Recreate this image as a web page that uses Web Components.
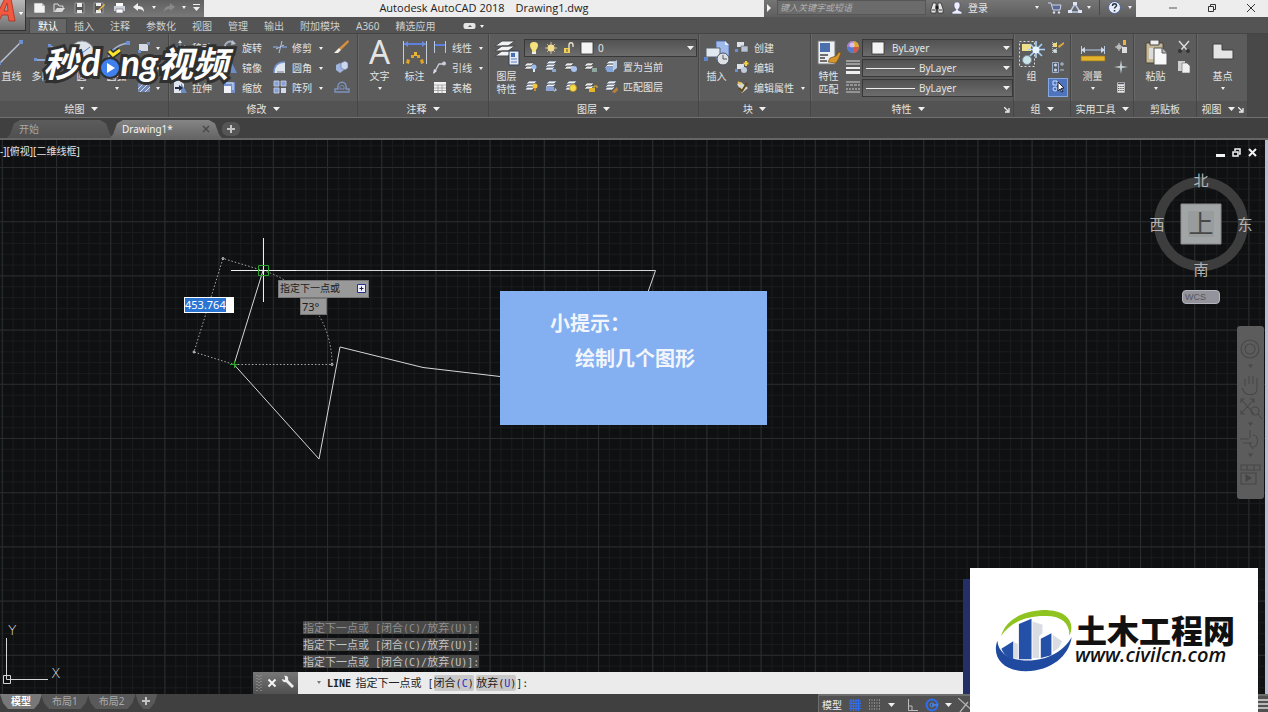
<!DOCTYPE html>
<html lang="zh-CN">
<head>
<meta charset="utf-8">
<title>Autodesk AutoCAD 2018</title>
<style>
	html, body {
		margin: 0;
		height: 100%;
	}
	body {
		display: flex;
		flex-direction: column;
		position: relative;
		overflow: hidden;
		background: #404040;
		color: #e4e4e4;
		font: 10px/14px "Noto Sans", "Noto Sans CJK SC", sans-serif;
	}
	drawing-area {
		flex: 1;
	}
	video-mark {
		position: absolute;
		left: 43px;
		top: 39px;
	}
	site-card {
		position: absolute;
		right: 10px;
		bottom: 0;
	}
</style>
</head>
<body>
<title-bar></title-bar>
<ribbon-tabs></ribbon-tabs>
<ribbon-bar></ribbon-bar>
<doc-tabs></doc-tabs>
<drawing-area></drawing-area>
<status-bar></status-bar>
<video-mark></video-mark>
<site-card></site-card>

<script>
// name: [width, height, markup]
const sheets = `<path d="M3 4h7l-3 3H0zM3 7h7l-3 3H0z" fill="#eee" stroke="#444" stroke-width=".6"/>`
const stack = `<path d="M5 2h8l-3 3H2zM4 5h8l-3 3H1zM3 8h8l-3 3H1z" fill="#eef2f6" stroke="#4a5668" stroke-width=".7"/>`
const ICONS = {
	caret: [7, 4, `<path d="M0 0h7L3.500 4z" fill="#f0f0f0"/>`],
	dot: [4, 3, `<path d="M0 0h4L2 3z" fill="#f0f0f0"/>`],
	right: [4, 8, `<path d="M0 0l4 4-4 4z" fill="#f4f4f4"/>`],
	launch: [6, 6, `<path d="M0 0l4 4M5 1v4H1" fill="none" stroke="#eee" stroke-width="1.300"/>`],
	app: [24, 24, `<path d="M-6 21L5-2h6l4 23h-6l-1-6H2l-3 6zM4 11h4L7 3z" fill="#c94a35" stroke="#8c2a1c" stroke-width=".8"/>`],
	new: [13, 12, `<path d="M1 1h8l3 3v7H1z" fill="#f2f2f2" stroke="#777" stroke-width=".6"/><path d="M9 1v3h3" fill="#bbb"/>`],
	open: [13, 12, `<path d="M1 10V2h4l1 2h4v2" fill="none" stroke="#ddd"/><path d="M1 10l3-4h8l-3 4z" fill="#d8d8d8"/>`],
	save: [13, 12, `<path d="M2 1h9v10H2z" fill="#555" stroke="#999"/><path d="M4 1h5v4H4zM4 8h5v3H4z" fill="#eee"/>`],
	saveas: [13, 12, `<path d="M1 1h9v10H1z" fill="#555" stroke="#999"/><path d="M3 1h5v3H3zM3 8h5v3H3z" fill="#eee"/><path d="M5 8l6-6 1 1-6 6z" fill="#f4bb42"/>`],
	print: [13, 12, `<path d="M3 1h7v3H3z" fill="#fff"/><path d="M1 4h11v5H1z" fill="#cdd1d8"/><path d="M3 7h7v4H3z" fill="#fff" stroke="#778" stroke-width=".7"/>`],
	undo: [12, 12, `<path d="M0 5l5-4v3c4 0 6 2 6 6-1-2-3-3-6-3v2z" fill="#eee"/>`],
	redo: [12, 12, `<path d="M12 5L7 1v3C3 4 1 6 1 10c1-2 3-3 6-3v2z" fill="#888"/>`],
	more: [7, 7, `<path d="M0 0h7v1H0zM0 3h7L3.500 7z" fill="#f0f0f0"/>`],
	binoc: [14, 12, `<path d="M3 1h3v10H1V7zM8 1h3l2 6v4H8z" fill="#e6e6e6" stroke="#333" stroke-width=".8"/><path d="M6 4h2v3H6zM2 8h3M9 8h3" stroke="#333" stroke-width="1"/>`],
	user: [12, 12, `<path d="M6 0c3 0 3 2 3 4S7 7 7 8l4 2v2H1v-2l4-2C5 7 3 6 3 4s0-4 3-4z" fill="#eef" stroke="#3e4d6d" stroke-width=".6"/>`],
	cart: [14, 12, `<path d="M0 1h3l2 7h7l1-5H4" fill="#5b6990" stroke="#cdd6ee"/><circle cx="6" cy="10.500" r="1.200" fill="#dde"/><circle cx="11" cy="10.500" r="1.200" fill="#dde"/>`],
	a360: [14, 12, `<path d="M7 2L2 10h10z" fill="none" stroke="#b9c8e6" stroke-width="1.600"/><path d="M5 0h4v3H5zM0 8h4v3H0zM10 8h4v3h-4z" fill="#dfe6f4"/>`],
	help: [13, 13, `<circle cx="6.500" cy="6.500" r="6" fill="#e8edf8" stroke="#4a6192"/><path d="M4.500 5c0-3 4-3 4-.500 0 1.500-2 1.500-2 3M6.500 9v1.500" fill="none" stroke="#234" stroke-width="1.500"/>`],
	min: [10, 10, `<path d="M1 5h8" stroke="#555"/>`],
	restore: [10, 10, `<path d="M1.500 3.500h5v5h-5zM3.500 3V1.500h5v5H7" fill="none" stroke="#333"/>`],
	close: [10, 10, `<path d="M1 1l8 8M9 1L1 9" stroke="#333"/>`],
	play: [13, 8, `<rect x=".5" y="1" width="12" height="6" rx="2" fill="#e6e6e6"/><path d="M5 5h4L7 3z" fill="#555"/>`],
	line: [26, 26, `<path d="M0 24L22 2" stroke="#b8c2d4" stroke-width="1.500"/><path d="M20 0h4v4h-4zM-1 22h3v3h-3z" fill="#6b8fd0"/>`],
	pline: [26, 26, `<path d="M1 20h14c8 0 8-14 0-14" fill="none" stroke="#8fa4ce" stroke-width="2"/><path d="M14 4h3v3h-3zM0 18h3v3H0z" fill="#6e92d4"/>`],
	circle: [26, 26, `<circle cx="13" cy="13" r="12" fill="#dfe3e8" stroke="#8a9098"/><path d="M13 13l8-6" stroke="#4d79c7"/>`],
	arc: [26, 26, `<path d="M3 22C5 12 12 5 24 3" fill="none" stroke="#a5b4ce" stroke-width="1.500"/><path d="M22 1h4v4h-4zM1 20h4v4H1zM8 9h4v4H8z" fill="#6b8fd0"/>`],
	rect: [14, 14, `<path d="M2 4h9v7H2z" fill="#d4dae6"/><path d="M10 2h3v3h-3zM1 10h3v3H1z" fill="#6f8fcb"/>`],
	ellipse: [14, 14, `<ellipse cx="7" cy="7" rx="6" ry="4" fill="none" stroke="#b8c2d4"/><path d="M6 6h2v2H6z" fill="#6f8fcb"/>`],
	hatch: [14, 14, `<path d="M1 3h12v9H1z" fill="#7187b4"/><path d="M1 9l6-6M3 12l9-9M8 12l5-5" stroke="#d8deea"/>`],
	move: [14, 14, `<path d="M7 0l2 3H5zM7 14l2-3H5zM0 7l3-2v4zM14 7l-3-2v4z" fill="#dde3ee"/><path d="M7 3v8M3 7h8" stroke="#91a6cf"/>`],
	copy: [14, 14, `<circle cx="5" cy="6" r="4" fill="#788dba"/><circle cx="9" cy="8" r="4" fill="#d3d9e5"/>`],
	stretch: [14, 14, `<path d="M1 1h6l4 3v9H1z" fill="#dfe6ef"/><path d="M8 3l6 10H8z" fill="#6e8cc7"/><path d="M2 7h4V5l4 3-4 3V9H2z" fill="#222d42"/>`],
	rotate: [14, 14, `<path d="M11 3a5.500 5.500 0 1 0 1 7" fill="none" stroke="#a6b0c2" stroke-width="2"/><path d="M9 0l4 4-5 1z" fill="#b8c2d4"/>`],
	mirror: [14, 14, `<path d="M6 1v12H0z" fill="#dfe3ea"/><path d="M8 1v12h6z" fill="#6e8cc7"/>`],
	scale: [14, 14, `<path d="M1 2h11v11H8V6H1z" fill="#7390cc"/><path d="M1 6h7v7H1z" fill="#eff2f6"/><path d="M3 3h7v7" fill="none" stroke="#dce4f4"/>`],
	trim: [14, 14, `<path d="M0 7h5M9 7h5" stroke="#7d97cb" stroke-width="1.500"/><path d="M6 13L9 1M3 9l8-4" stroke="#b7c7e2"/>`],
	fillet: [14, 14, `<path d="M1 13C1 5 5 2 12 2v11z" fill="#dfe5ee"/><path d="M1 13C1 5 5 2 12 2" fill="none" stroke="#7493d0" stroke-width="1.500"/><path d="M4 12h7" stroke="#777"/>`],
	array: [14, 14, `<path d="M1 1h5v5H1zM8 1h5v5H8zM1 8h5v5H1z" fill="#89a1d5" stroke="#c8d4ee" stroke-width=".8"/><path d="M8 8h5v5H8z" fill="#d5dce9"/>`],
	erase: [16, 14, `<path d="M5 8l9-8 1 2-8 8z" fill="#d9903b"/><path d="M0 13l5-5 2 2-3 3z" fill="#f4efe5"/>`],
	explode: [16, 14, `<path d="M2 5l4-2 4 2v5l-4 3-4-3z" fill="#9fb4de"/><path d="M7 3l4-2 3 2v5l-3 2-4-2z" fill="#cbd7ef" stroke="#607199" stroke-width=".6"/>`],
	offset: [16, 14, `<path d="M1 12h14V9h-3c2-9-10-9-8 0H1z" fill="none" stroke="#7e93be" stroke-width="1.400"/><path d="M6 9c-1-5 5-5 4 0z" fill="none" stroke="#7e93be"/>`],
	dim: [26, 26, `<path d="M1.500 1v23M24.500 1v23" stroke="#c6ccd6"/><path d="M2 4h22" stroke="#5d7fe0" stroke-width="2"/><path d="M2 4l4-3v6zM24 4l-4-3v6z" fill="#6b8cd8"/><path d="M9 15h3v3H9zM15 15h3v3h-3zM5 19l3 1-1 4-3-1zM21 19l-3 1 1 4 3-1z" fill="#e0a425"/><path d="M12 12h3v4h-3z" fill="#e8b63c"/>`],
	linear: [14, 14, `<path d="M1.500 1v12M12.500 1v12" stroke="#b7c7e2"/><path d="M2 5h10" stroke="#5d7fe0" stroke-width="2"/>`],
	leader: [14, 14, `<path d="M1 13l5-9h5" fill="none" stroke="#c9d0dc" stroke-width="1.300"/><circle cx="11" cy="3.500" r="2" fill="#c9d0dc"/><path d="M0 14l1-5 3 2z" fill="#dde"/>`],
	table: [14, 14, `<path d="M1 2h12v11H1z" fill="#f2f2f2"/><path d="M1 5h12M1 8h12M1 10.500h12M5 5v8M9 5v8" stroke="#999" stroke-width=".8"/>`],
	layerprop: [26, 26, `<path d="M8 1h13l-7 5H1z M8 6h13l-7 5H1zM8 11h13l-7 5H1z" fill="#f0f2f4" stroke="#484848"/><path d="M15 11h10v14H15z" fill="#e6ecf6" stroke="#333e56"/><path d="M17 13h4v4h-4z" fill="#4770b8"/><path d="M17 19h6M17 22h6" stroke="#5b7cb8"/>`],
	bulb: [12, 14, `<path d="M6 1c6 0 4 6 2 8v3H4V9C2 7 0 1 6 1z" fill="#f6e27c"/><path d="M4 11h4v2H4z" fill="#eee"/>`],
	sun: [14, 14, `<path d="M7 1v12M1 7h12M3 3l8 8M11 3l-8 8" stroke="#c9bd95"/><circle cx="7" cy="7" r="3.500" fill="#f3dc8c"/>`],
	unlock: [14, 14, `<path d="M2 7h6v5H2z" fill="#f2cf57"/><path d="M7 7V4c0-3 4-3 4 0v2" fill="none" stroke="#e8e0c8" stroke-width="1.400"/><path d="M4.500 8h1v3h-1z" fill="#554"/>`],
	swatch: [14, 14, `<path d="M1 1h12v12H1z" fill="#f4f4f4" stroke="#333" stroke-width=".8"/>`],
	layoff: [14, 14, sheets + `<circle cx="10" cy="8" r="2.500" fill="#9bbdf0"/><path d="M9 10h2v3H9z" fill="#dfe8f8"/>`],
	layiso: [14, 14, stack + `<path d="M8 10h4v3H8z" fill="#90a4c8"/>`],
	layfrz: [14, 14, sheets + `<circle cx="10" cy="10" r="3" fill="#a8c4f2"/>`],
	laylck: [14, 14, sheets + `<path d="M8 9h5v4H8z" fill="#8ea7a0"/>`],
	laycur: [14, 14, stack + `<path d="M1 8h9v5H3z" fill="#84a5db"/><path d="M9 4l4-3v8l-4 3z" fill="#b8cbe9"/>`],
	layon: [14, 14, stack + `<circle cx="11" cy="7" r="2.500" fill="#f4c73c"/><path d="M10 9h2v3h-2z" fill="#c98a2a"/>`],
	layuniso: [14, 14, stack + `<path d="M2 8h8v4H2z" fill="#8ba6d6"/><path d="M11 9l2 2-3 2z" fill="#b8cbe9"/>`],
	laythw: [14, 14, stack + `<circle cx="9" cy="9" r="3.500" fill="#f6dc4d" stroke="#b98a1c" stroke-width=".7"/>`],
	layulk: [14, 14, sheets + `<path d="M5 9h6v4H5z" fill="#e3b52c"/><path d="M10 9V7h3v2" fill="none" stroke="#e3b52c"/>`],
	laymch: [14, 14, stack + `<path d="M8 13l5-5 1 3-3 3z" fill="#b9823a"/>`],
	insert: [26, 26, `<path d="M12 1h9l4 4v15H12z" fill="#9fb9ea" stroke="#47639c" stroke-width=".8"/><path d="M21 1v4h4" fill="#e5ecfa"/><path d="M2 8h14v9H2z" fill="#e2e8ef" stroke="#57616f"/><circle cx="19" cy="19" r="6" fill="#dde1e6" stroke="#4b525c"/><path d="M19 15v4h4" fill="none" stroke="#555"/><path d="M0 17h4v4H0z" fill="#5f86cc"/>`],
	create: [14, 14, `<path d="M2 2h7v5H2z" fill="#dde2ea"/><path d="M6 6h7v6H6z" fill="#b8c3d8" stroke="#555" stroke-width=".6"/><path d="M0 9h3v3H0z" fill="#6b8fd0"/>`],
	edit: [14, 14, `<path d="M2 4h7v5H2z" fill="#dde2ea"/><circle cx="9" cy="10" r="3" fill="#c1cadc"/><path d="M0 9h3v3H0z" fill="#6b8fd0"/><path d="M11 1v5M8.500 3.500h5" stroke="#f2ce46" stroke-width="2"/>`],
	attr: [14, 14, `<path d="M2 4l4-2 7 6-6 5z" fill="#d6d6d6"/><path d="M4 8l3 3 5-8" fill="none" stroke="#5c4a18" stroke-width="2"/><path d="M3 2l3 2" stroke="#f0c040" stroke-width="2"/>`],
	match: [26, 26, `<path d="M2 1h17v23H2z" fill="#eceff3" stroke="#777"/><path d="M4 3h10v9H4z" fill="#4c6fae"/><path d="M4 15h8M4 18h5M4 21h7" stroke="#444" stroke-width="1.500"/><path d="M14 18l6-2 3-4 2 1-2 5-3 5-8-1z" fill="#d6962e" stroke="#7b4d12" stroke-width=".7"/>`],
	wheel: [14, 14, `<circle cx="7" cy="7" r="6" fill="#79c06e"/><path d="M7 7V1a6 6 0 0 1 6 6z" fill="#e2a33a"/><path d="M7 7h6a6 6 0 0 1-6 6z" fill="#d4574c"/><path d="M7 7v6a6 6 0 0 1-6-6z" fill="#5778d0"/><path d="M7 7H1a6 6 0 0 1 6-6z" fill="#a87bce"/><circle cx="6" cy="5" r="2.500" fill="#fff" opacity=".5"/>`],
	weight: [14, 14, `<path d="M0 1h14M0 4h14" stroke="#ddd"/><path d="M0 8h14" stroke="#eee" stroke-width="2"/><path d="M0 12.500h14" stroke="#eee" stroke-width="3"/>`],
	ltype: [14, 14, `<path d="M0 2h14M0 12h14" stroke="#ccc"/><path d="M0 5h14" stroke="#ccc" stroke-dasharray="3 1"/><path d="M0 9h14" stroke="#ccc" stroke-dasharray="2 1"/>`],
	group: [28, 28, `<path d="M1.500 1.500h15v25h-15z" fill="none" stroke="#d8d8d8" stroke-dasharray="2 2"/><path d="M4 4h9v7H4z" fill="#f0de8a"/><circle cx="9" cy="20" r="4.500" fill="#cbe4e8" stroke="#789"/><path d="M18 1v17M10 9.500h17M12 4l12 12M24 4L12 16" stroke="#a8d4fb" stroke-width="1.600"/><circle cx="18" cy="10" r="3.500" fill="#e6f5ff"/>`],
	ungroup: [14, 14, `<path d="M1.500 2v11M5.500 2v11" stroke="#bbb" stroke-dasharray="1 1"/><path d="M2 3h4v4H2z" fill="#ecd77e"/><circle cx="4" cy="11" r="2" fill="#cdd"/><path d="M7 6l6-4v2L8 8z" fill="#e0a93d"/>`],
	groupedit: [14, 14, `<path d="M1.500 2.500h6v10h-6z" fill="none" stroke="#9aaed0"/><circle cx="4.500" cy="5" r="1.500" fill="#ccd6e8"/><circle cx="4.500" cy="10" r="1.500" fill="#ccd6e8"/><path d="M9 4h4M11 2v4M9 10h4" stroke="#b6bfd0"/>`],
	groupsel: [14, 14, `<path d="M2 2h4v4H2z" fill="none" stroke="#cfe0ff"/><circle cx="4" cy="10" r="2" fill="none" stroke="#cfe0ff"/><path d="M7 3l6 6-3 .500 2 3-1.500.500-1.500-3-2 2z" fill="#fff" stroke="#223"/>`],
	measure: [26, 26, `<path d="M1.500 6v8M24.500 6v8M2 10h22" stroke="#b8cbe6"/><path d="M1 10l4-3v6zM25 10l-4-3v6z" fill="#cbd8ea"/><path d="M1 16h24v5H1z" fill="#e3b32d" stroke="#94701a" stroke-width=".7"/>`],
	quick: [14, 14, `<path d="M5 3v8M1 7h8" stroke="#ccc"/><circle cx="5" cy="7" r="2.500" fill="#bbb"/><path d="M9 0h3v5H9z" fill="#eab23f"/><path d="M8 7h5v6H8z" fill="#ddd"/>`],
	point: [14, 14, `<path d="M7 0l1 6 6 1-6 1-1 6-1-6-6-1 6-1z" fill="#c8d4d8"/>`],
	calc: [14, 14, `<path d="M3 2h8v11H3z" fill="#e8e8e8" stroke="#555" stroke-width=".6"/><path d="M4 3.500h6" stroke="#556" stroke-width="1.500"/><path d="M4 6.500h6M4 8.500h6M4 10.500h6" stroke="#666" stroke-dasharray="1.500 .7"/>`],
	paste: [26, 26, `<path d="M3 3h17v20H3z" fill="#c6b997" stroke="#4a453a"/><path d="M7 0h9v5H7z" fill="#f0f0f0" stroke="#444"/><path d="M6 8h9v11H6z" fill="#dcdcdc"/><path d="M11 8h8l5 5v12H11z" fill="#f8f8f8" stroke="#555"/><path d="M19 8v5h5" fill="#bbb" stroke="#555"/>`],
	cut: [14, 14, `<path d="M2 1l8 9M12 1L4 10" stroke="#ddd" stroke-width="1.400"/><circle cx="3" cy="11" r="2" fill="#333"/><circle cx="11" cy="11" r="2" fill="#333"/>`],
	clip: [14, 14, `<path d="M1 1h7v10H1z" fill="#cfcfcf"/><path d="M5 3h5l3 3v7H5z" fill="#efefef" stroke="#666" stroke-width=".6"/>`],
	base: [22, 26, `<path d="M1 4h9v6h11v9H1z" fill="#e4e4e4" stroke="#3f3f3f"/>`],
	tabx: [8, 8, `<path d="M1 1l6 6M7 1L1 7" stroke="#484848" stroke-width="1.400"/>`],
	plus: [8, 8, `<path d="M4 0v8M0 4h8" stroke="#c4c4c4" stroke-width="2"/>`],
	cmdx: [10, 10, `<path d="M1.500 1.500l7 7M8.500 1.500l-7 7" stroke="#f4f4f4" stroke-width="2"/>`],
	wrench: [14, 14, `<path d="M1 4l3 1V2L3 1c3-1 5 1 4 4l6 6-2 2-6-6C3 8 1 6 1 4z" fill="#eee"/>`],
	grip: [6, 16, `<path d="M1 0v16M5 0v16M3 1v15" stroke="#aaa" stroke-dasharray="1 2"/>`],
	viewmin: [9, 9, `<path d="M0 6h9v3H0z" fill="#f4f4f4"/>`],
	viewres: [9, 9, `<path d="M1 4h5v4H1zM3 3V1h5v5H7" fill="none" stroke="#f4f4f4" stroke-width="1.500"/>`],
	viewx: [9, 9, `<path d="M1 1l7 7M8 1L1 8" stroke="#f4f4f4" stroke-width="2"/>`],
	gridon: [14, 14, `<path d="M1 3h12M1 5.500h12M1 8h12M1 10.500h12M3 1v12M5.500 1v12M8 1v12M10.500 1v12" stroke="#2f6ef0" stroke-width="1.200"/>`],
	snap: [14, 14, `<path d="M1 2h12M1 5h12M1 8h12M1 11h12" stroke="#999" stroke-width="1.400" stroke-dasharray="1 1.500"/>`],
	ortho: [14, 14, `<path d="M3.500 1v11.500H13M4 8h3v4" fill="none" stroke="#bbb"/>`],
	polar: [14, 14, `<circle cx="7" cy="7" r="5.500" fill="none" stroke="#2f6ef0" stroke-width="2"/><circle cx="7" cy="7" r="2" fill="none" stroke="#4b86f6"/><path d="M7 7h6" stroke="#4b86f6" stroke-width="1.500"/>`],
	iso: [16, 14, `<path d="M0 0l16 14M2 14l8-10" stroke="#b4b4b4" stroke-width="1.300"/>`],
	burger: [10, 10, `<path d="M0 1h10M0 5h10M0 9h10" stroke="#ddd" stroke-width="1.500"/>`]
}

class UiIcon extends HTMLElement {
	connectedCallback() {
		if(this.shadowRoot) return;
		const [w, h, body] = ICONS[this.getAttribute('name')];
		this.attachShadow({ mode: "open" }).innerHTML = `
		<style>
		:host { display: inline-flex; flex: none; }
		svg { display: block; }
		</style>
		<svg width="${w}" height="${h}" viewBox="0 0 ${w} ${h}" aria-hidden="true">${body}</svg>`
	}
}
customElements.define('ui-icon', UiIcon)

const icon = name => `<ui-icon name="${name}"></ui-icon>`
const BUTTON = `
	button {
		font: inherit;
		color: inherit;
		background: none;
		border: 0;
		padding: 0;
		margin: 0;
		cursor: pointer;
	}
	button:hover { filter: brightness(1.2); }`

class TitleBar extends HTMLElement {
	constructor() {
		super();
		this.attachShadow({ mode: "open" }).innerHTML = `
		<style>${BUTTON}
		:host { display: flex; height: 17px; background: #ededed; }
		#app {
			position: relative;
			z-index: 2;
			width: 26px;
			height: 31px;
			box-sizing: border-box;
			border: solid #2a2a2a;
			border-width: 0 1px 1px 0;
			background: linear-gradient(#9a9a9a, #5c5c5c);
			display: flex;
			align-items: flex-start;
			overflow: hidden;
		}
		#app ui-icon:last-child { position: absolute; right: 2px; top: 12px; }
		.bar { display: flex; align-items: center; background: linear-gradient(#606060, #787878); height: 17px; box-sizing: border-box; padding-bottom: 2px; }
		#quick { width: 178px; padding-left: 7px; gap: 7px; }
		#title { flex: 1; display: flex; justify-content: center; gap: 11px; font: 11px/15px "Open Sans", sans-serif; color: #222; }
		#tools { width: 372px; background: linear-gradient(#757575, #5e5e5e); }
		#tools > button { display: flex; align-items: center; }
		input {
			width: 149px;
			height: 15px;
			box-sizing: border-box;
			margin: 0 4px 0 6px;
			padding: 0 2px;
			border: 1px solid #565656;
			background: #6b6b6b;
			font: italic 9px "Noto Sans CJK SC", sans-serif;
		}
		input::placeholder { color: #b0b0b0; }
		#login { gap: 5px; margin: 0 auto 0 7px; }
		#window { display: flex; justify-content: space-between; align-items: center; width: 132px; padding: 0 12px 2px 32px; box-sizing: border-box; }
		#window button { display: flex; }
		.sep { width: 1px; height: 15px; background: #4a4a4a; }
		</style>
		<button id="app" aria-label="应用程序">${icon('app')}${icon('dot')}</button>
		<div id="quick" class="bar">
			${[['new', '新建'], ['open', '打开'], ['save', '保存'], ['saveas', '另存为'], ['print', '打印'], ['undo', '放弃'], ['dot', '放弃列表'], ['redo', '重做'], ['dot', '重做列表'], ['more', '自定义']].map(b => `<button aria-label="${b[1]}" style="display:flex">${icon(b[0])}</button>`).join('')}
		</div>
		<div id="title"><span>Autodesk AutoCAD 2018</span><span>Drawing1.dwg</span></div>
		<div id="tools" class="bar">
			<button aria-label="展开" style="margin-left:3px">${icon('right')}</button>
			<input type="search" aria-label="搜索" placeholder="键入关键字或短语">
			<button aria-label="查找">${icon('binoc')}</button>
			<button id="login">${icon('user')}<span>登录</span></button>
			<button aria-label="帐户" style="margin-right:9px">${icon('dot')}</button>
			<button aria-label="应用商店" style="margin-right:6px">${icon('cart')}</button>
			<button aria-label="A360" style="gap:5px">${icon('a360')}${icon('dot')}</button>
			<span class="sep" style="margin:0 8px"></span>
			<button aria-label="帮助" style="gap:7px;margin-right:4px">${icon('help')}${icon('dot')}</button>
		</div>
		<div id="window">
			<button aria-label="最小化">${icon('min')}</button>
			<button aria-label="还原">${icon('restore')}</button>
			<button aria-label="关闭">${icon('close')}</button>
		</div>`
	}
}
customElements.define('title-bar', TitleBar)

class RibbonTabs extends HTMLElement {
	constructor() {
		super();
		const tabs = ['默认', '插入', '注释', '参数化', '视图', '管理', '输出', '附加模块', 'A360', '精选应用'];
		this.attachShadow({ mode: "open" }).innerHTML = `
		<style>${BUTTON}
		:host { display: flex; align-items: flex-end; height: 17px; padding-left: 30px; background: #545454; border-bottom: 1px solid #454545; box-sizing: border-box; }
		button { padding: 0 8px; line-height: 14px; color: #cfcfcf; }
		.on { background: #666; color: #fff; box-shadow: 0 0 0 1px #474747; }
		#play { display: flex; align-items: center; gap: 4px; height: 14px; margin-left: 11px; }
		</style>
		${tabs.map((t, i) => `<button class="${i ? '' : 'on'}">${t}</button>`).join('')}
		<button id="play" aria-label="显示选项">${icon('play')}${icon('dot')}</button>`
	}
}
customElements.define('ribbon-tabs', RibbonTabs)

// Button of a ribbon panel: icon, label, optional drop-down mark
class RibbonTool extends HTMLElement {
	connectedCallback() {
		if(this.shadowRoot) return;
		const label = this.getAttribute('label') || '';
		const name = this.getAttribute('icon');
		this.attachShadow({ mode: "open" }).innerHTML = `
		<style>${BUTTON}
		:host { display: block; }
		button { display: flex; align-items: center; gap: 5px; height: 20px; white-space: nowrap; }
		.text + ui-icon { margin-left: 2px; }
		:host([large]) { width: 35px; flex: none; }
		:host([large]) button { flex-direction: column; width: 100%; height: 58px; gap: 0; padding-top: 2px; }
		:host([large]) .pic { height: 30px; display: flex; align-items: flex-start; }
		:host([large]) .text { line-height: 13px; width: 20px; white-space: normal; text-align: center; }
		:host([large]) .wide { width: auto; white-space: nowrap; }
		:host([large]) .text + ui-icon { margin: 4px 0 0; }
		.glyph { font: 33px/24px "Noto Sans", sans-serif; }
		:host([on]) button { background: #4d74bd; outline: 1px solid #86a8e2; height: 17px; width: 18px; justify-content: center; margin: 1px -2px; }
		</style>
		<button ${label ? '' : `aria-label="${this.getAttribute('hint')}"`}>
			<span class="pic">${name === 'A' ? '<span class="glyph">A</span>' : icon(name)}</span>
			${label ? `<span class="text ${label.length === 3 ? 'wide' : ''}">${label}</span>` : ''}
			${this.hasAttribute('drop') ? icon('dot') : ''}
		</button>`
	}
}
customElements.define('ribbon-tool', RibbonTool)

class RibbonSelect extends HTMLElement {
	connectedCallback() {
		if(this.shadowRoot) return;
		this.attachShadow({ mode: "open" }).innerHTML = `
		<style>
		:host { display: flex; align-items: center; gap: 4px; position: relative; height: 18px; box-sizing: border-box; padding-left: 3px; border: 1px solid #383838; background: linear-gradient(#525252, #6c6c6c); }
		select { appearance: none; flex: 1; min-width: 0; height: 100%; border: 0; padding: 0; background: none; color: inherit; font: inherit; }
		.mark { position: absolute; right: 2px; pointer-events: none; display: flex; }
		</style>
		<slot></slot>
		<select aria-label="${this.getAttribute('label')}"><option>${this.getAttribute('value')}</option></select>
		<span class="mark">${icon('caret')}</span>`
	}
}
customElements.define('ribbon-select', RibbonSelect)

class RibbonPanel extends HTMLElement {
	connectedCallback() {
		if(this.shadowRoot) return;
		this.attachShadow({ mode: "open" }).innerHTML = `
		<style>${BUTTON}
		:host { display: flex; flex-direction: column; flex: none; height: 83px; box-sizing: border-box; border-right: 1px solid #464646; box-shadow: inset 1px 0 #686868; background: #5c5c5c; }
		#body { display: flex; height: 67px; box-sizing: border-box; padding: 4px 0 0 4px; }
		#name { display: flex; align-items: center; position: relative; height: 16px; background: #535353; }
		#name button { display: flex; align-items: center; justify-content: center; gap: 6px; flex: 1; line-height: 16px; }
		:host([launch]) #name button { padding-right: 8px; }
		#launch { position: absolute; right: 3px; bottom: 4px; display: flex; }
		</style>
		<div id="body"><slot></slot></div>
		<div id="name">
			<button>${this.getAttribute('label')}${this.hasAttribute('plain') ? '' : icon('caret')}</button>
			${this.hasAttribute('launch') ? `<span id="launch">${icon('launch')}</span>` : ''}
		</div>`
	}
}
customElements.define('ribbon-panel', RibbonPanel)

class RibbonBar extends HTMLElement {
	constructor() {
		super();
		const small = list => list.map(n => `<ribbon-tool icon="${n}" hint="${n}"></ribbon-tool>`).join('');
		this.attachShadow({ mode: "open" }).innerHTML = `
		<style>
		:host { display: flex; height: 83px; background: #484848; border-bottom: 1px solid #707070; flex: none; }
		ribbon-panel:first-of-type { margin-left: -6px; }
		.col { display: flex; flex-direction: column; }
		.icons { display: flex; gap: 6px; align-items: center; }
		.rule { width: 49px; height: 1px; background: #eee; }
		.props { width: 151px; gap: 2px; padding-top: 1px; }
		</style>
		<ribbon-panel label="绘图" style="width:175px">
			<ribbon-tool large icon="line" label="直线" style="margin-left:-4px"></ribbon-tool>
			<ribbon-tool large icon="pline" label="多段线"></ribbon-tool>
			<ribbon-tool large icon="circle" label="圆" drop></ribbon-tool>
			<ribbon-tool large icon="arc" label="圆弧" drop></ribbon-tool>
			<div class="col" style="margin-left:3px">
				<ribbon-tool icon="rect" hint="矩形" drop></ribbon-tool>
				<ribbon-tool icon="ellipse" hint="椭圆" drop></ribbon-tool>
				<ribbon-tool icon="hatch" hint="图案填充" drop></ribbon-tool>
			</div>
		</ribbon-panel>
		<ribbon-panel label="修改" style="width:189px">
			<div class="col" style="width:50px">
				<ribbon-tool icon="move" label="移动"></ribbon-tool>
				<ribbon-tool icon="copy" hint="复制"></ribbon-tool>
				<ribbon-tool icon="stretch" label="拉伸"></ribbon-tool>
			</div>
			<div class="col" style="width:50px">
				<ribbon-tool icon="rotate" label="旋转"></ribbon-tool>
				<ribbon-tool icon="mirror" label="镜像"></ribbon-tool>
				<ribbon-tool icon="scale" label="缩放"></ribbon-tool>
			</div>
			<div class="col" style="width:61px">
				<ribbon-tool icon="trim" label="修剪" drop></ribbon-tool>
				<ribbon-tool icon="fillet" label="圆角" drop></ribbon-tool>
				<ribbon-tool icon="array" label="阵列" drop></ribbon-tool>
			</div>
			<div class="col">${small(['erase', 'explode', 'offset'])}</div>
		</ribbon-panel>
		<ribbon-panel label="注释" style="width:131px">
			<ribbon-tool large icon="A" label="文字" drop></ribbon-tool>
			<ribbon-tool large icon="dim" label="标注"></ribbon-tool>
			<div class="col" style="margin-left:1px">
				<ribbon-tool icon="linear" label="线性" drop></ribbon-tool>
				<ribbon-tool icon="leader" label="引线" drop></ribbon-tool>
				<ribbon-tool icon="table" label="表格"></ribbon-tool>
			</div>
		</ribbon-panel>
		<ribbon-panel label="图层" style="width:210px">
			<ribbon-tool large icon="layerprop" label="图层特性" style="margin-left:-4px"></ribbon-tool>
			<div class="col" style="width:173px;padding:1px 0 0">
				<ribbon-select label="图层" value="0">${icon('bulb')}${icon('sun')}${icon('unlock')}${icon('swatch')}</ribbon-select>
				<div class="icons">${small(['layoff', 'layiso', 'layfrz', 'laylck'])}<ribbon-tool icon="laycur" label="置为当前"></ribbon-tool></div>
				<div class="icons">${small(['layon', 'layuniso', 'laythw', 'layulk'])}<ribbon-tool icon="laymch" label="匹配图层"></ribbon-tool></div>
			</div>
		</ribbon-panel>
		<ribbon-panel label="块" style="width:112px">
			<ribbon-tool large icon="insert" label="插入" style="margin-left:-4px"></ribbon-tool>
			<div class="col" style="margin-left:1px">
				<ribbon-tool icon="create" label="创建"></ribbon-tool>
				<ribbon-tool icon="edit" label="编辑"></ribbon-tool>
				<ribbon-tool icon="attr" label="编辑属性" drop></ribbon-tool>
			</div>
		</ribbon-panel>
		<ribbon-panel label="特性" launch style="width:203px">
			<ribbon-tool large icon="match" label="特性匹配" style="margin-left:-4px"></ribbon-tool>
			<div class="col" style="margin:0 2px 0 0">${small(['wheel', 'weight', 'ltype'])}</div>
			<div class="col props">
				<ribbon-select label="颜色" value="ByLayer"><span style="margin:0 3px 0 5px;display:flex">${icon('swatch')}</span></ribbon-select>
				<ribbon-select label="线宽" value="ByLayer"><span class="rule"></span></ribbon-select>
				<ribbon-select label="线型" value="ByLayer"><span class="rule"></span></ribbon-select>
			</div>
		</ribbon-panel>
		<ribbon-panel label="组" style="width:57px">
			<ribbon-tool large icon="group" label="组" style="margin-left:-4px"></ribbon-tool>
			<div class="col" style="margin-left:2px">
				${small(['ungroup', 'groupedit'])}
				<ribbon-tool on icon="groupsel" hint="组选择"></ribbon-tool>
			</div>
		</ribbon-panel>
		<ribbon-panel label="实用工具" style="width:63px">
			<ribbon-tool large icon="measure" label="测量" drop></ribbon-tool>
			<div class="col" style="margin-left:4px">${small(['quick', 'point', 'calc'])}</div>
		</ribbon-panel>
		<ribbon-panel label="剪贴板" plain style="width:63px">
			<ribbon-tool large icon="paste" label="粘贴" drop></ribbon-tool>
			<div class="col" style="margin-left:4px">${small(['cut', 'clip'])}</div>
		</ribbon-panel>
		<ribbon-panel label="视图" launch style="width:51px">
			<ribbon-tool large icon="base" label="基点" drop style="margin-left:4px"></ribbon-tool>
		</ribbon-panel>`
	}
}
customElements.define('ribbon-bar', RibbonBar)

class DocTabs extends HTMLElement {
	constructor() {
		super();
		this.attachShadow({ mode: "open" }).innerHTML = `
		<style>${BUTTON}
		:host { display: flex; align-items: flex-end; flex: none; height: 22px; box-sizing: border-box; padding-left: 7px; background: #404040; border-bottom: 2px solid #656565; }
		.tab {
			display: flex;
			align-items: center;
			justify-content: space-between;
			width: 106px;
			height: 18px;
			padding: 0 12px;
			color: #a8a8a8;
			background: linear-gradient(#5c5c5c, #505050);
			clip-path: polygon(0 100%, 3px 80%, 7px 20%, 13px 0, calc(100% - 13px) 0, calc(100% - 7px) 20%, calc(100% - 3px) 80%, 100% 100%);
		}
		.on { color: #f4f4f4; background: linear-gradient(#858585, #656565); width: 112px; margin-left: -3px; }
		#add { display: flex; align-items: center; justify-content: center; width: 18px; height: 14px; border-radius: 6px; background: #555; margin: 0 0 2px; }
		</style>
		<button class="tab">开始</button>
		<button class="tab on">Drawing1*${icon('tabx')}</button>
		<button id="add" aria-label="新图形">${icon('plus')}</button>`
	}
}
customElements.define('doc-tabs', DocTabs)

class ViewCube extends HTMLElement {
	constructor() {
		super();
		this.attachShadow({ mode: "open" }).innerHTML = `
		<style>
		:host { display: flex; flex-direction: column; align-items: center; gap: 12px; width: 106px; }
		text { font-size: 15px; fill: #b4b4b4; text-anchor: middle; }
		.top { font-size: 25px; fill: #484848; }
		button { height: 14px; width: 38px; border: 1px solid #b4b4bc; border-radius: 4px; background: #93939b; color: #55555e; font: 9px/10px "Liberation Sans", sans-serif; text-align: left; padding: 0 2px; }
		</style>
		<svg width="106" height="108" viewBox="0 0 106 108">
			<circle cx="53" cy="54" r="42" fill="none" stroke="#3d3d3d" stroke-width="10"/>
			<path d="M33 34h40v40H33z" fill="#a2a5a5" stroke="#8b8b8b"/>
			<path d="M40 41h26v26H40z" fill="#989c9c"/>
			<text x="53" y="16">北</text><text x="9" y="60">西</text><text x="97" y="60">东</text><text x="53" y="105">南</text>
			<text class="top" x="53" y="63">上</text>
		</svg>
		<button>WCS</button>`
	}
}
customElements.define('view-cube', ViewCube)

class CommandLine extends HTMLElement {
	constructor() {
		super();
		const past = `指定下一点或<i> [</i>闭合<i>(C)/</i>放弃<i>(U)]:</i>`;
		this.attachShadow({ mode: "open" }).innerHTML = `
		<style>${BUTTON}
		:host { display: block; font: 11px/14px "Noto Sans CJK SC", sans-serif; }
		i, b { font-family: "DejaVu Sans Mono", monospace; font-size: 10px; font-style: normal; white-space: pre; }
		b { padding-right: 2px; }
		#history { display: flex; flex-direction: column; align-items: flex-start; gap: 4px; padding: 0 0 4px 50px; color: #c4c4c4; }
		#history div { background: #484848; line-height: 12px; height: 13px; border-radius: 1px; }
		#history div:first-child { color: #8f8f8f; }
		#row { display: flex; align-items: center; height: 22px; background: #ebebeb; color: #222; }
		#grip { display: flex; align-items: center; align-self: stretch; justify-content: space-between; width: 45px; box-sizing: border-box; padding: 0 3px; background: linear-gradient(#777, #505050); }
		#text { padding-left: 29px; position: relative; }
		#text ui-icon { position: absolute; left: 19px; top: 6px; filter: brightness(.5); }
		#text button { background: #c9c9c9; border-radius: 2px; line-height: 14px; }
		u { color: #2a2ad0; text-decoration: none; }
		</style>
		<div id="history"><div>${past}</div><div>${past}</div><div>${past}</div></div>
		<div id="row">
			<div id="grip">${icon('grip')}<button aria-label="关闭">${icon('cmdx')}</button><button aria-label="自定义">${icon('wrench')}</button></div>
			<div id="text">${icon('dot')}<b>LINE</b> 指定下一点或<i> [</i><button>闭合<i>(<u>C</u>)</i></button> <button>放弃<i>(<u>U</u>)</i></button><i>]:</i></div>
		</div>`
	}
}
customElements.define('command-line', CommandLine)

class DrawingArea extends HTMLElement {
	constructor() {
		super();
		this.attachShadow({ mode: "open" }).innerHTML = `
		<style>${BUTTON}
		:host { display: block; position: relative; min-height: 0; overflow: hidden; background: #0f1011; border-right: 3px solid #b6bcd6; }
		#plan { position: absolute; inset: 0; width: 100%; height: 100%; }
		#label { position: absolute; left: 0; top: 4px; }
		#buttons { position: absolute; right: 8px; top: 8px; display: flex; gap: 7px; }
		#buttons button { display: flex; }
		view-cube { position: absolute; right: 11px; top: 30px; }
		#nav { position: absolute; right: 1px; top: 186px; background: #5c5c5c; border-radius: 3px; width: 27px; height: 173px; }
		.dyn { position: absolute; box-sizing: border-box; background: #999; color: #1c1c1c; border: 1px solid #777; display: flex; align-items: center; }
		#prompt { left: 278px; top: 140px; width: 91px; height: 18px; padding: 0 2px 2px 1px; justify-content: space-between; }
		#angle { left: 300px; top: 158px; width: 27px; height: 17px; padding-left: 1px; font-size: 11px; }
		#length { left: 184px; top: 157px; height: 16px; background: #fff; padding: 1px 8px 1px 1px; border: 0; font-size: 11px; }
		#length input { width: 41px; height: 14px; border: 0; padding: 0; font: inherit; color: #fff; background: #2a74d2; }
		#ucs { position: absolute; left: 0; bottom: 0; }
		#ucs text { font: 200 14px "DejaVu Sans", sans-serif; fill: #ddd; }
		#tip { position: absolute; left: 500px; top: 151px; width: 267px; height: 134px; box-sizing: border-box; padding: 14px 50px; background: #84aff0; color: #f2f6fc; font: bold 20px/35px "Noto Sans CJK SC", sans-serif; white-space: nowrap; }
		#tip p { margin: 0; }
		#tip p + p { padding-left: 25px; }
		command-line { position: absolute; left: 253px; right: 302px; bottom: 0; }
		#edge { position: absolute; right: 295px; bottom: 0; width: 7px; height: 115px; background: #243065; }
		</style>
		<svg id="plan" aria-hidden="true">
			<defs>
				<pattern id="fine" width="10.840" height="10.840" patternUnits="userSpaceOnUse" x="56" y="27"><path d="M.5 0v10.840M0 .5h10.840" stroke="#191b1c"/></pattern>
				<pattern id="coarse" width="54.200" height="54.200" patternUnits="userSpaceOnUse" x="56" y="27"><path d="M.5 0v54.200M0 .5h54.200" stroke="#292c2d"/></pattern>
			</defs>
			<rect width="100%" height="100%" fill="url(#fine)"/>
			<rect width="100%" height="100%" fill="url(#coarse)"/>
			<g fill="none" stroke="#d6d6d6">
				<path d="M500 236.500L423 227.500 340 207 319 319 234 224.500 263 130.500H655.500L648 152"/>
				<path d="M263 130.500L223 118.500 194 212 234 224.500H332A98 98 0 0 0 263 130.500" stroke="#aaa" stroke-dasharray="1.500 2"/>
				<path d="M263.500 98v64M231 130.500h65" stroke="#eee"/>
				<path d="M258.500 125.500h10v10h-10zM230 224.500h8M234.500 221v7" stroke="#2ea52e"/>
				<circle cx="223" cy="118.500" r="1"/><circle cx="194" cy="212" r="1"/><circle cx="332" cy="224.500" r="1"/>
			</g>
		</svg>
		<div id="label">-][俯视][二维线框]</div>
		<div id="buttons">
			<button aria-label="最小化">${icon('viewmin')}</button>
			<button aria-label="还原">${icon('viewres')}</button>
			<button aria-label="关闭">${icon('viewx')}</button>
		</div>
		<view-cube></view-cube>
		<svg id="nav" viewBox="0 0 27 173" fill="none" stroke="#474747" stroke-width="1.100">
			<circle cx="13" cy="23" r="9"/><circle cx="13" cy="23" r="5"/>
			<path d="M12 39h3l-1.500 2zM12 97h3l-1.500 2zM12 128h3l-1.500 2z"/>
			<path d="M5 62l3 5c4 3 12 2 12-4V53M8 60v-7M12 58v-8M16 58v-8M20 58v-6"/>
			<path d="M4 73l13 15M4 88l13-15M4 77v-4h4M4 84v4h4M13 73h4v4"/><circle cx="18" cy="85" r="4"/><path d="M21 88l4 5"/>
			<path d="M3 113h9M13 104v8M12 117l4 6M16 109c6 0 6 12 0 12M6 117h9"/>
			<path d="M4 139h19v5H4zM10 139v5M17 139v5M4 147h15v11H4z"/><path d="M9 149v6l5-3z" fill="#454545"/>
		</svg>
		<label id="length" class="dyn"><input aria-label="长度" value="453.764"></label>
		<div id="prompt" class="dyn">指定下一点或<svg width="9" height="9"><path d="M.5.5h8v8h-8z" fill="#eef" stroke="#25308c"/><path d="M4.500 2.500v4M2.500 4.500h4" stroke="#223"/></svg></div>
		<div id="angle" class="dyn">73°</div>
		<svg id="ucs" width="66" height="76" viewBox="0 0 66 76">
			<path d="M6.500 20v41.500H48M3.500 57.500h7v8h-7z" fill="none" stroke="#d4d4d4"/>
			<text x="8" y="17">Y</text><text x="51" y="60">X</text>
		</svg>
		<command-line></command-line>
		<div id="edge"></div>
		<div id="tip"><p>小提示：</p><p>绘制几个图形</p></div>`
	}
}
customElements.define('drawing-area', DrawingArea)

class StatusBar extends HTMLElement {
	constructor() {
		super();
		this.attachShadow({ mode: "open" }).innerHTML = `
		<style>${BUTTON}
		:host { display: flex; flex: none; height: 18px; overflow: hidden; background: #404040; color: #aaa; }
		#layouts { display: flex; flex: 1; }
		#layouts button { height: 15px; padding: 0 11px; line-height: 15px; background: #595959; clip-path: polygon(0 0, 100% 0, calc(100% - 3px) 60%, calc(100% - 8px) 100%, 8px 100%, 3px 60%); margin-right: -1px; }
		#layouts .on { background: #787878; color: #fff; font-weight: bold; }
		#layouts .add { padding: 0 7px; margin-left: 1px; }
		#tools { display: flex; align-items: flex-start; gap: 6px; width: 450px; box-sizing: border-box; border: solid #6d6d6d; border-width: 2px 0 0 1px; padding: 2px 0 0 3px; background: #515151; color: #eee; }
		#tools button { display: flex; }
		#tools .drop { padding-top: 5px; }
		#tools button:last-child { margin: 1px 0 0 auto; }
		</style>
		<div id="layouts">
			<button class="on">模型</button><button>布局1</button><button>布局2</button><button class="add" aria-label="新建布局">${icon('plus')}</button>
		</div>
		<div id="tools">
			<button>模型</button>
			<button aria-label="栅格">${icon('gridon')}</button>
			<button aria-label="捕捉">${icon('snap')}</button>
			<button class="drop" aria-label="捕捉设置">${icon('caret')}</button>
			<button aria-label="正交" style="margin-left:4px">${icon('ortho')}</button>
			<button aria-label="极轴">${icon('polar')}</button>
			<button class="drop" aria-label="极轴设置">${icon('caret')}</button>
			<button aria-label="等轴测">${icon('iso')}</button>
			<button aria-label="自定义">${icon('burger')}</button>
		</div>`
	}
}
customElements.define('status-bar', StatusBar)

// Video brand over the ribbon, the "o" is a play disc
class VideoMark extends HTMLElement {
	constructor() {
		super();
		this.attachShadow({ mode: "open" }).innerHTML = `
		<style>
		:host { display: flex; align-items: center; pointer-events: none; height: 46px; color: #fff; font: italic bold 35px/46px "Noto Sans CJK SC", sans-serif; -webkit-text-stroke: 6px #303030; paint-order: stroke fill; }
		.latin { font: italic bold 36px/46px Lato, sans-serif; }
		span:first-of-type { margin-right: 3px; }
		svg { margin: 0 1px; overflow: visible; z-index: 1; }
		</style>
		<span>秒</span><span class="latin">d</span>
		<svg width="18" height="34" viewBox="0 0 18 34">
			<circle cx="9" cy="23" r="11" fill="#303030"/><circle cx="9" cy="23" r="9" fill="#3f7fee"/>
			<path d="M6 18v10l8-5z" fill="#fff"/>
			<path d="M8 6l4 4 7-5" fill="none" stroke="#303030" stroke-width="6"/>
			<path d="M8 6l4 4 7-5" fill="none" stroke="#f6e62c" stroke-width="3"/>
		</svg>
		<span class="latin">ng</span><span>视频</span>`
	}
}
customElements.define('video-mark', VideoMark)

class SiteCard extends HTMLElement {
	constructor() {
		super();
		this.attachShadow({ mode: "open" }).innerHTML = `
		<style>
		:host { display: flex; align-items: center; width: 288px; height: 144px; box-sizing: border-box; padding-left: 25px; gap: 2px; background: #fff; color: #111; white-space: nowrap; }
		div { display: flex; flex-direction: column; }
		strong { font: 900 32px/30px "Noto Sans CJK SC", sans-serif; }
		a { color: inherit; text-decoration: none; font: italic 600 20px/22px "Open Sans", sans-serif; }
		</style>
		<svg width="78" height="65" viewBox="105 140 235 195">
			<path d="M123 224C140 168 200 145 265 146c60 2 82 40 64 78 2-36-22-60-70-60-60-2-108 20-136 60z" fill="#8fc320"/>
			<path d="M112 238c4 40 40 60 92 60 60 0 108-28 132-70-8 56-62 102-138 102-66 0-104-40-86-92z" fill="#1f4aa0"/>
			<path d="M124 262l36-22v54c-16-4-28-14-36-32zM177 188l38-16v122h-38zM243 232l32-16v66l-32 8z" fill="#2450a8"/>
			<path d="M218 180l30 10v26l-10 8v66h-20zM279 220l28 20-10 20-18 12z" fill="#d9dce2"/>
			<path d="M162 242l12 6v44h-12z" fill="#d9dce2"/>
		</svg>
		<div><strong>土木工程网</strong><a href="#">www.civilcn.com</a></div>`
	}
}
customElements.define('site-card', SiteCard)
</script>
</body>
</html>
